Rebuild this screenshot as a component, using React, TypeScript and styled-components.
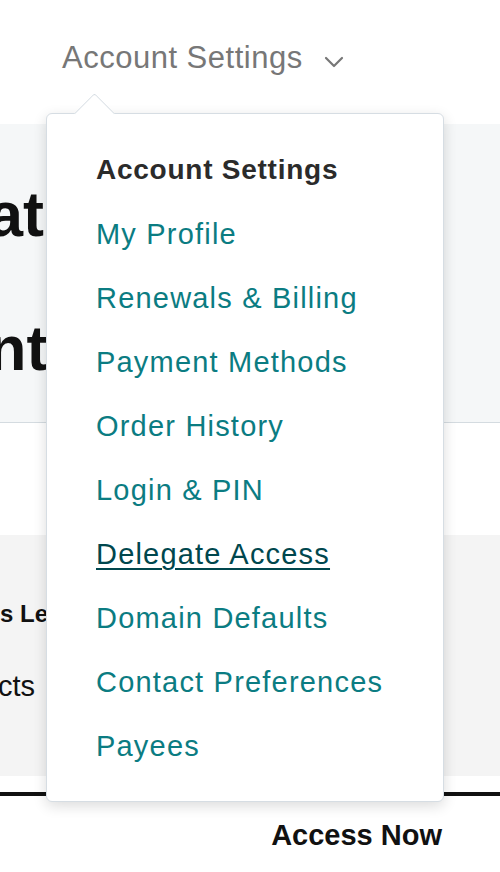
import React from 'react'
import styled, { createGlobalStyle } from 'styled-components';

const GlobalStyle = createGlobalStyle`
  html, body {
    margin: 0;
    padding: 0;
    background: #fff;
  }
  body {
    font-family: "Liberation Sans", Arial, sans-serif;
    overflow: hidden;
  }
`;

const Page = styled.div`
  position: relative;
  width: 500px;
  height: 872px;
  overflow: hidden;
`;

const TopBar = styled.header`
  height: 124px;
  display: flex;
  align-items: flex-start;
  padding-left: 62px;
  box-sizing: border-box;
`;

const NavItem = styled.div`
  position: relative;
  margin-top: 40px;
  z-index: 5;
`;

const NavButton = styled.button`
  display: flex;
  align-items: center;
  gap: 21px;
  padding: 0;
  border: 0;
  background: none;
  font-family: inherit;
  font-size: 31px;
  line-height: 36px;
  letter-spacing: 0.5px;
  color: #777;
  cursor: pointer;

  svg {
    margin-top: 8px;
  }
`;

const Dropdown = styled.nav`
  position: absolute;
  left: -16px;
  top: 73px;
  width: 398px;
  box-sizing: border-box;
  background: #fff;
  border: 1px solid #d6dde3;
  border-radius: 6px;
  box-shadow: 0 4px 14px rgba(0, 0, 0, 0.14);
  padding: 24px 0 23px 49px;

  &::before {
    content: '';
    position: absolute;
    left: 33px;
    top: -15px;
    width: 28px;
    height: 28px;
    background: #fff;
    border-top: 1px solid #d6dde3;
    border-left: 1px solid #d6dde3;
    border-top-left-radius: 3px;
    transform: rotate(45deg);
  }
`;

const MenuList = styled.ul`
  position: relative;
  list-style: none;
  margin: 0;
  padding: 0;
`;

const MenuHeading = styled.li`
  font-size: 28px;
  line-height: 64px;
  font-weight: 700;
  letter-spacing: 0.75px;
  color: #2b2b2b;
`;

const MenuLink = styled.a<{ $active?: boolean }>`
  display: block;
  font-size: 29px;
  line-height: 64px;
  letter-spacing: 1.2px;
  color: ${p => (p.$active ? '#00474e' : '#0b7c82')};
  text-decoration: ${p => (p.$active ? 'underline' : 'none')};
  text-decoration-thickness: 2px;
  text-underline-offset: 4px;
`;

const Hero = styled.section`
  height: 299px;
  background: #f5f7f8;
  border-bottom: 1px solid #d4dbe0;
  box-sizing: border-box;
  padding-top: 54px;
`;

const HeroLine = styled.div<{ $gap?: number }>`
  margin-left: -12px;
  margin-top: ${p => p.$gap || 0}px;
  font-size: 63px;
  line-height: 72px;
  font-weight: 700;
  color: #111;
`;

const Spacer = styled.div`
  height: 112px;
`;

const Card = styled.section`
  height: 241px;
  background: #f4f4f4;
  box-sizing: border-box;
  padding-top: 64px;
`;

const CardTitle = styled.div`
  font-size: 24px;
  line-height: 30px;
  font-weight: 700;
  color: #111;
`;

const CardText = styled.div`
  margin-top: 40px;
  margin-left: -2px;
  font-size: 29px;
  line-height: 34px;
  color: #111;
`;

const Rule = styled.hr`
  margin: 16px 0 0;
  border: 0;
  height: 4px;
  background: #111;
`;

const Footer = styled.div`
  display: flex;
  justify-content: flex-end;
  padding: 22px 58px 0 0;
`;

const FooterLink = styled.span`
  font-size: 29px;
  line-height: 34px;
  font-weight: 700;
  color: #111;
`;

const Chevron = () => (
  <svg width="20" height="12" viewBox="0 0 20 12" fill="none">
    <path d="M2 2 L10 10 L18 2" stroke="#777" strokeWidth="2.2" strokeLinecap="round" strokeLinejoin="round" />
  </svg>
);

const links = [
  'My Profile',
  'Renewals & Billing',
  'Payment Methods',
  'Order History',
  'Login & PIN',
  'Delegate Access',
  'Domain Defaults',
  'Contact Preferences',
  'Payees',
];

export default function App() {
  return (
    <Page>
      <GlobalStyle />
      <TopBar>
        <NavItem>
          <NavButton>
            Account Settings
            <Chevron />
          </NavButton>
          <Dropdown>
            <MenuList>
              <MenuHeading>Account Settings</MenuHeading>
              {links.map(l => (
                <li key={l}>
                  <MenuLink href="#" $active={l === 'Delegate Access'}>{l}</MenuLink>
                </li>
              ))}
            </MenuList>
          </Dropdown>
        </NavItem>
      </TopBar>
      <Hero>
        <HeroLine>at</HeroLine>
        <HeroLine $gap={62}>nt</HeroLine>
      </Hero>
      <Spacer />
      <Card>
        <CardTitle>s Le</CardTitle>
        <CardText>cts</CardText>
      </Card>
      <Rule />
      <Footer>
        <FooterLink>Access Now</FooterLink>
      </Footer>
    </Page>
  )
}
